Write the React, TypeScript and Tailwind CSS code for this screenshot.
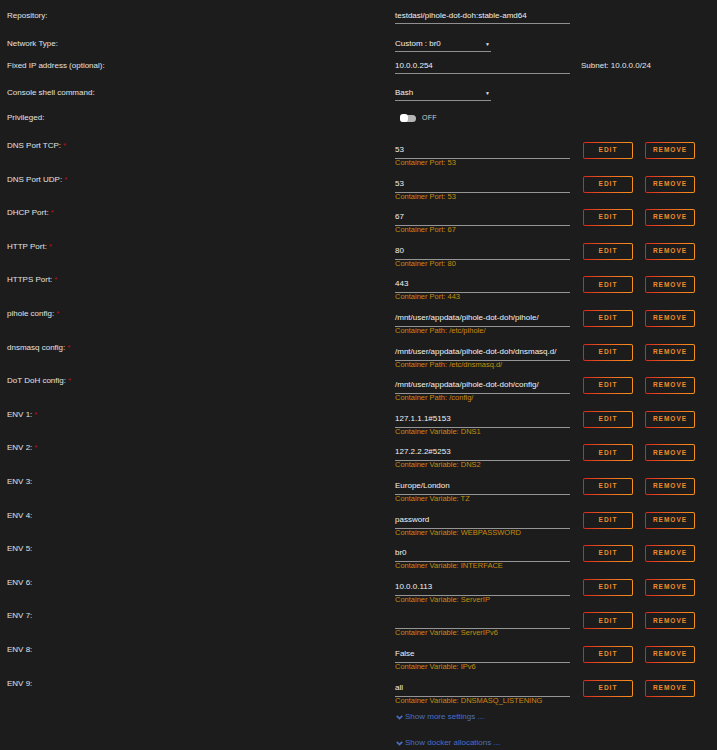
import React from "react";

type Row = { label: string; req: boolean; value: string; sub: string };

const rows: Row[] = [
  { label: "DNS Port TCP:", req: true, value: "53", sub: "Container Port: 53" },
  { label: "DNS Port UDP:", req: true, value: "53", sub: "Container Port: 53" },
  { label: "DHCP Port:", req: true, value: "67", sub: "Container Port: 67" },
  { label: "HTTP Port:", req: true, value: "80", sub: "Container Port: 80" },
  { label: "HTTPS Port:", req: true, value: "443", sub: "Container Port: 443" },
  { label: "pihole config:", req: true, value: "/mnt/user/appdata/pihole-dot-doh/pihole/", sub: "Container Path: /etc/pihole/" },
  { label: "dnsmasq config:", req: true, value: "/mnt/user/appdata/pihole-dot-doh/dnsmasq.d/", sub: "Container Path: /etc/dnsmasq.d/" },
  { label: "DoT DoH config:", req: true, value: "/mnt/user/appdata/pihole-dot-doh/config/", sub: "Container Path: /config/" },
  { label: "ENV 1:", req: true, value: "127.1.1.1#5153", sub: "Container Variable: DNS1" },
  { label: "ENV 2:", req: true, value: "127.2.2.2#5253", sub: "Container Variable: DNS2" },
  { label: "ENV 3:", req: false, value: "Europe/London", sub: "Container Variable: TZ" },
  { label: "ENV 4:", req: false, value: "password", sub: "Container Variable: WEBPASSWORD" },
  { label: "ENV 5:", req: false, value: "br0", sub: "Container Variable: INTERFACE" },
  { label: "ENV 6:", req: false, value: "10.0.0.113", sub: "Container Variable: ServerIP" },
  { label: "ENV 7:", req: false, value: "", sub: "Container Variable: ServerIPv6" },
  { label: "ENV 8:", req: false, value: "False", sub: "Container Variable: IPv6" },
  { label: "ENV 9:", req: false, value: "all", sub: "Container Variable: DNSMASQ_LISTENING" },
];

function Btn({ text }: { text: string }) {
  return (
    <div className="h-[17px] w-[50px] rounded-[2px] bg-gradient-to-r from-[#d8231f] to-[#f7921e] p-[1px]">
      <div className="flex h-full w-full items-center justify-center rounded-[1px] bg-[#1c1c1c] text-[6.5px] font-bold leading-none tracking-[1px] text-[#ec8d2c]">
        {text}
      </div>
    </div>
  );
}

function Chevron() {
  return (
    <svg width="7" height="5" viewBox="0 0 7 5" className="mr-[2px] block">
      <path d="M0.8 0.8 L3.5 3.6 L6.2 0.8" fill="none" stroke="#4a6fc0" strokeWidth="1.7" />
    </svg>
  );
}

function Field({ text, w, select }: { text: string; w: string; select?: boolean }) {
  return (
    <div className={`${w} flex items-center justify-between border-b border-[#8f8f8f] pb-[2px] text-[8px] leading-[10px] text-[#f0f0f0]`}>
      <span>{text}</span>
      {select && <span className="pr-[1px] text-[5px] leading-[10px] text-[#e0e0e0]">▼</span>}
    </div>
  );
}

export default function App() {
  return (
    <div
      className="h-[750px] w-full overflow-hidden bg-[#1c1c1c] pl-[7px] text-[#e2e2e2]"
      style={{ fontFamily: '"Liberation Sans", Arial, sans-serif' }}
    >
      <div className="grid h-[39px] grid-cols-[388px_1fr] items-start pt-[11px] text-[8px] leading-[10px]">
        <div>Repository:</div>
        <Field text="testdasi/pihole-dot-doh:stable-amd64" w="w-[175px]" />
      </div>
      <div className="grid h-[22px] grid-cols-[388px_1fr] items-start text-[8px] leading-[10px]">
        <div>Network Type:</div>
        <Field text="Custom : br0" w="w-[96px]" select />
      </div>
      <div className="grid h-[27px] grid-cols-[388px_175px_1fr] items-start text-[8px] leading-[10px]">
        <div>Fixed IP address (optional):</div>
        <Field text="10.0.0.254" w="w-[175px]" />
        <div className="pl-[11px] text-[#e6e6e6]">Subnet: 10.0.0.0/24</div>
      </div>
      <div className="grid h-[25px] grid-cols-[388px_1fr] items-start text-[8px] leading-[10px]">
        <div>Console shell command:</div>
        <Field text="Bash" w="w-[96px]" select />
      </div>
      <div className="grid h-[26px] grid-cols-[388px_1fr] items-start text-[8px] leading-[10px]">
        <div>Privileged:</div>
        <div className="flex h-[10px] items-center pl-[5px]">
          <div className="relative h-[7px] w-[16px] rounded-[4px] bg-[#b5b5b5]">
            <div className="absolute left-0 top-[-0.5px] h-[8px] w-[8px] rounded-[3px] bg-white" />
          </div>
          <span className="ml-[6px] text-[7px] tracking-[0.3px] text-[#cfcfcf]">OFF</span>
        </div>
      </div>

      {rows.map((r, i) => (
        <div key={i} className="grid h-[33.6px] grid-cols-[388px_175px_13px_50px_12px_50px] items-start">
          <div className="mt-[2px] text-[8px] leading-[10px]">
            {r.label}
            {r.req && <span className="ml-[2px] text-[#c01010]">*</span>}
          </div>
          <div>
            <div className="mt-[6px] h-[14px] border-b border-[#959595] text-[8px] leading-[10px] text-[#f2f2f2]">
              {r.value}
            </div>
            <div className="whitespace-nowrap text-[7.5px] leading-[8px] text-[#c98a10]">{r.sub}</div>
          </div>
          <div />
          <div className="mt-[3px]">
            <Btn text="EDIT" />
          </div>
          <div />
          <div className="mt-[3px]">
            <Btn text="REMOVE" />
          </div>
        </div>
      ))}

      <div className="ml-[389px] mt-[2px] flex items-center text-[8px] leading-[10px] text-[#4a6fc0]">
        <Chevron />
        <span>Show more settings ...</span>
      </div>
      <div className="ml-[389px] mt-[16px] flex items-center text-[8px] leading-[10px] text-[#4a6fc0]">
        <Chevron />
        <span>Show docker allocations ...</span>
      </div>
    </div>
  );
}
